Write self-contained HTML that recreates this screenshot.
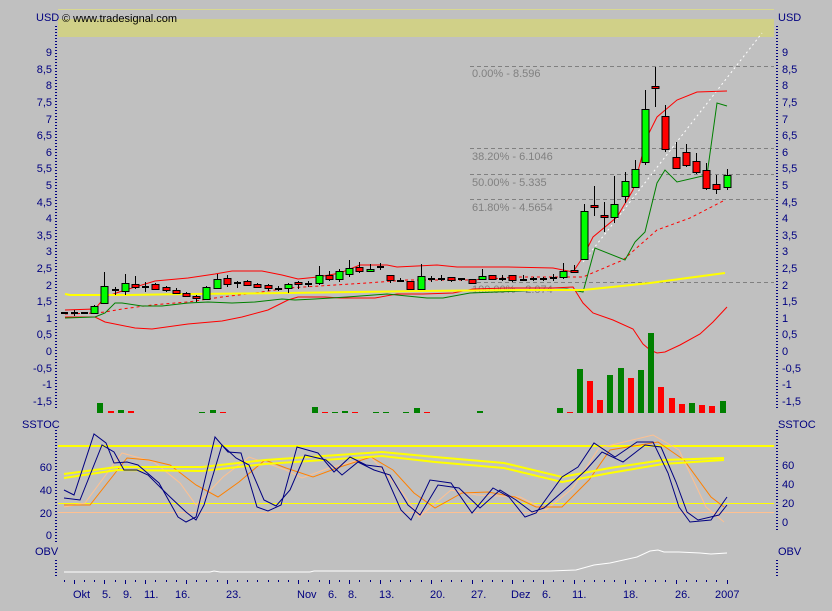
<!DOCTYPE html>
<html><head><meta charset="utf-8"><style>
html,body{margin:0;padding:0;background:#c0c0c0;}
svg{display:block;font-family:"Liberation Sans",sans-serif;font-size:11px;}
.ax{fill:#000080;}
</style></head><body>
<svg width="832" height="611" viewBox="0 0 832 611" xmlns="http://www.w3.org/2000/svg">
<rect width="832" height="611" fill="#c0c0c0"/>
<line x1="58" y1="9.5" x2="774" y2="9.5" stroke="#d8d890" stroke-width="1"/>
<rect x="58" y="19" width="716" height="18" fill="#d0d088"/>
<text x="62" y="22" fill="#000">© www.tradesignal.com</text>
<text x="36" y="21" class="ax">USD</text>
<text x="778" y="21" class="ax">USD</text>

<!-- axes dotted -->
<g stroke="#000080" stroke-width="2" stroke-dasharray="1,2">
<line x1="56" y1="26" x2="56" y2="410"/>
<line x1="777" y1="26" x2="777" y2="410"/>
<line x1="56" y1="430" x2="56" y2="542"/>
<line x1="777" y1="430" x2="777" y2="530"/>
<line x1="56" y1="560" x2="56" y2="578"/>
<line x1="777" y1="560" x2="777" y2="578"/>
</g>
<g class="ax" text-anchor="end">
<text x="52" y="56">9</text><text x="52" y="73">8,5</text><text x="52" y="89">8</text><text x="52" y="106">7,5</text><text x="52" y="123">7</text><text x="52" y="139">6,5</text><text x="52" y="156">6</text><text x="52" y="172">5,5</text><text x="52" y="189">5</text><text x="52" y="206">4,5</text><text x="52" y="222">4</text><text x="52" y="239">3,5</text><text x="52" y="255">3</text><text x="52" y="272">2,5</text><text x="52" y="289">2</text><text x="52" y="305">1,5</text><text x="52" y="322">1</text><text x="52" y="338">0,5</text><text x="52" y="355">0</text><text x="52" y="372">-0,5</text><text x="52" y="388">-1</text><text x="52" y="405">-1,5</text>
<text x="52" y="471">60</text><text x="52" y="494">40</text><text x="52" y="517">20</text><text x="52" y="539">0</text>
</g>
<g class="ax">
<text x="782" y="56">9</text><text x="782" y="73">8,5</text><text x="782" y="89">8</text><text x="782" y="106">7,5</text><text x="782" y="123">7</text><text x="782" y="139">6,5</text><text x="782" y="156">6</text><text x="782" y="172">5,5</text><text x="782" y="189">5</text><text x="782" y="206">4,5</text><text x="782" y="222">4</text><text x="782" y="239">3,5</text><text x="782" y="255">3</text><text x="782" y="272">2,5</text><text x="782" y="289">2</text><text x="782" y="305">1,5</text><text x="782" y="322">1</text><text x="782" y="338">0,5</text><text x="782" y="355">0</text><text x="782" y="372">-0,5</text><text x="782" y="388">-1</text><text x="782" y="405">-1,5</text>
<text x="782" y="469">60</text><text x="782" y="488">40</text><text x="782" y="507">20</text><text x="782" y="526">0</text>
<text x="778" y="428">SSTOC</text><text x="778" y="555">OBV</text>
</g>
<text x="22" y="428" class="ax">SSTOC</text>
<text x="35" y="555" class="ax">OBV</text>

<!-- fib lines -->
<g stroke="#808080" stroke-dasharray="4,3" stroke-width="1">
<line x1="470" y1="66.5" x2="774" y2="66.5"/>
<line x1="470" y1="148.5" x2="774" y2="148.5"/>
<line x1="470" y1="174.5" x2="774" y2="174.5"/>
<line x1="470" y1="199.5" x2="774" y2="199.5"/>
<line x1="470" y1="282.5" x2="774" y2="282.5"/>
</g>
<g fill="#808080">
<text x="472" y="77">0.00% - 8.596</text>
<text x="472" y="160">38.20% - 6.1046</text>
<text x="472" y="186">50.00% - 5.335</text>
<text x="472" y="211">61.80% - 4.5654</text>
<text x="472" y="293">100.00% - 2.074</text>
</g>
<polyline points="583,262 762,33" stroke="#fff" stroke-dasharray="2,3" fill="none"/>

<!-- bands -->
<g fill="none" stroke-width="1">
<polyline stroke="#ff0000" points="65,310 95,309 105,297 122,291 155,281 188,278 215,274 232,271 262,271 282,275 298,279 318,277 340,273 360,265 387,265 397,267 437,265 457,267 507,267 553,268 573,272 583,257 593,237 617,217 633,190 647,137 657,117 677,100 697,92 727,91"/>
<polyline stroke="#ff0000" points="65,317 95,317 105,322 135,328 152,329 188,324 222,321 242,317 268,310 288,300 298,297 325,297 340,298 375,298 397,294 423,294 453,293 473,289 507,288 553,288 573,287 583,303 593,313 613,320 633,329 643,344 650,350 657,353 665,352 680,345 700,334 713,322 727,307"/>
<polyline stroke="#ff0000" stroke-dasharray="3,3" points="65,314 95,313 105,312 122,309 152,305 188,302 222,297 255,293 288,288 335,285 367,283 407,280 470,280 520,277 573,277 583,277 623,260 657,230 690,218 725,200"/>
<polyline stroke="#008000" points="65,318 95,317 105,313 115,303 122,303 142,306 162,306 188,303 208,302 232,303 255,302 282,299 295,300 315,299 347,297 387,294 427,298 443,298 470,293 520,291 567,289 583,292 595,248 625,260 635,242 645,232 657,183 665,170 677,182 707,175 717,103 727,106"/>
<polyline stroke="#ffff00" stroke-width="2" points="65,294 70,295 128,295 188,294 288,293 353,292 420,291 520,290 583,290 650,283 725,273"/>
</g>

<!-- candles -->
<g stroke="#000" stroke-width="1">
<path d="M64.5 312V314M74.5 310V316M84.5 312V314M94.5 305V314M104.5 272V303M115.5 287V295M125.5 274V295M135.5 276V289M145.5 282V292M155.5 283V290M166.5 286V292M176.5 288V293M186.5 292V297M196.5 295V302M206.5 286V299M217.5 274V289M227.5 275V287M237.5 281V288M247.5 280V286M257.5 283V288M268.5 284V291M278.5 286V291M288.5 283V293M298.5 281V289M308.5 281V287M319.5 266V285M329.5 271V281M339.5 269V282M349.5 260V277M359.5 262V273M370.5 264V272M380.5 263V270M390.5 275V283M400.5 278V282M410.5 281V289M421.5 264V290M431.5 276V282M441.5 275V281M451.5 277V282M461.5 278V281M472.5 279V283M482.5 269V280M492.5 275V279M502.5 275V281M512.5 275V282M523.5 275V281M533.5 277V281M543.5 277V281M553.5 274V281M563.5 263V279M574.5 265V273M584.5 204V259M594.5 186V216M604.5 202V232M614.5 176V223M625.5 172V203M635.5 160V188M645.5 90V165M655.5 67V107M665.5 105V152M676.5 142V168M686.5 144V167M696.5 153V174M706.5 163V190M716.5 175V194M727.5 169V190"/>
<path stroke-width="2" d="M61 313H68M71 313H78M81 313H88M112 290H119M142 287H149M234 283H241M275 289H282M305 284H312M377 267H384M397 281H404M428 279H435M438 279H445M458 279H465M499 279H506M520 280H527M530 279H537M540 279H547M550 278H557"/>
</g>
<g stroke="#000" stroke-width="1" fill="#00ff00">
<rect x="91" y="306.5" width="7" height="7"/><rect x="101" y="286.5" width="7" height="17"/><rect x="122" y="283.5" width="7" height="8"/><rect x="203" y="287.5" width="7" height="12"/><rect x="214" y="279.5" width="7" height="9"/><rect x="285" y="284.5" width="7" height="4"/><rect x="316" y="275.5" width="7" height="8"/><rect x="336" y="271.5" width="7" height="8"/><rect x="346" y="268.5" width="7" height="6"/><rect x="367" y="269.5" width="7" height="2"/><rect x="418" y="276.5" width="7" height="13"/><rect x="479" y="276.5" width="7" height="3"/><rect x="560" y="271.5" width="7" height="6"/><rect x="581" y="211.5" width="7" height="48"/><rect x="611" y="204.5" width="7" height="13"/><rect x="622" y="181.5" width="7" height="15"/><rect x="632" y="169.5" width="7" height="18"/><rect x="642" y="109.5" width="7" height="53"/><rect x="724" y="175.5" width="7" height="12"/>
</g>
<g stroke="#000" stroke-width="1" fill="#ff0000">
<rect x="132" y="284.5" width="7" height="3"/><rect x="152" y="284.5" width="7" height="5"/><rect x="163" y="287.5" width="7" height="3"/><rect x="173" y="290.5" width="7" height="3"/><rect x="183" y="293.5" width="7" height="3"/><rect x="193" y="296.5" width="7" height="2"/><rect x="224" y="278.5" width="7" height="6"/><rect x="244" y="281.5" width="7" height="4"/><rect x="254" y="284.5" width="7" height="3"/><rect x="265" y="285.5" width="7" height="3"/><rect x="295" y="282.5" width="7" height="2"/><rect x="326" y="275.5" width="7" height="4"/><rect x="356" y="267.5" width="7" height="4"/><rect x="387" y="275.5" width="7" height="5"/><rect x="407" y="281.5" width="7" height="8"/><rect x="448" y="277.5" width="7" height="3"/><rect x="469" y="279.5" width="7" height="4"/><rect x="489" y="275.5" width="7" height="4"/><rect x="509" y="275.5" width="7" height="5"/><rect x="571" y="270.5" width="7" height="2"/><rect x="591" y="205.5" width="7" height="2"/><rect x="601" y="215.5" width="7" height="2"/><rect x="652" y="86.5" width="7" height="2"/><rect x="662" y="116.5" width="7" height="33"/><rect x="673" y="157.5" width="7" height="11"/><rect x="683" y="152.5" width="7" height="13"/><rect x="693" y="161.5" width="7" height="11"/><rect x="703" y="170.5" width="7" height="18"/><rect x="713" y="184.5" width="7" height="5"/>
</g>

<!-- volume -->
<g fill="#008000">
<rect x="97" y="403" width="6" height="10"/><rect x="118" y="410" width="6" height="3"/><rect x="199" y="412" width="6" height="1"/><rect x="210" y="410" width="6" height="3"/><rect x="312" y="407" width="6" height="6"/><rect x="332" y="412" width="6" height="1"/><rect x="342" y="411" width="6" height="2"/><rect x="373" y="412" width="6" height="1"/><rect x="383" y="412" width="6" height="1"/><rect x="403" y="412" width="6" height="1"/><rect x="414" y="408" width="6" height="5"/><rect x="477" y="411" width="6" height="2"/><rect x="557" y="408" width="6" height="5"/><rect x="577" y="369" width="6" height="44"/><rect x="607" y="375" width="6" height="38"/><rect x="618" y="368" width="6" height="45"/><rect x="638" y="370" width="6" height="43"/><rect x="648" y="333" width="6" height="80"/><rect x="689" y="403" width="6" height="10"/><rect x="720" y="401" width="6" height="12"/>
</g>
<g fill="#ff0000">
<rect x="108" y="411" width="6" height="2"/><rect x="128" y="411" width="6" height="2"/><rect x="220" y="412" width="6" height="1"/><rect x="322" y="412" width="6" height="1"/><rect x="352" y="412" width="6" height="1"/><rect x="424" y="412" width="6" height="1"/><rect x="567" y="412" width="6" height="1"/><rect x="587" y="381" width="6" height="32"/><rect x="597" y="400" width="6" height="13"/><rect x="628" y="378" width="6" height="35"/><rect x="658" y="387" width="6" height="26"/><rect x="669" y="398" width="6" height="15"/><rect x="679" y="404" width="6" height="9"/><rect x="699" y="405" width="6" height="8"/><rect x="709" y="406" width="6" height="7"/>
</g>

<!-- stoch -->
<line x1="58" y1="446" x2="774" y2="446" stroke="#ffff00" stroke-width="2"/>
<line x1="58" y1="503.5" x2="774" y2="503.5" stroke="#ffff00" stroke-width="1"/>
<line x1="58" y1="512.5" x2="774" y2="512.5" stroke="#ffc090" stroke-width="1"/>
<g fill="none" stroke-width="1">
<polyline stroke="#ffc090" points="64,507 85,503 122,453 154,462 180,483 196,505 223,477 249,457 286,470 302,478 329,468 371,457 403,493 419,517 451,490 477,495 520,497 546,510 573,488 599,448 653,435 679,450 706,507 724,522"/>
<polyline stroke="#ff8000" points="64,505 90,505 127,458 149,460 170,465 196,485 218,497 239,482 265,460 286,468 313,477 340,467 371,457 393,470 414,493 435,508 462,493 488,492 515,497 536,507 562,507 589,480 610,450 658,442 684,460 711,497 724,507"/>
<polyline stroke="#ffff00" stroke-width="2" points="64,474 117,467 202,467 265,460 382,452 435,457 504,463 562,477 610,468 663,460 724,458"/>
<polyline stroke="#ffff00" stroke-width="2" points="64,478 117,470 202,471 265,464 382,456 435,462 504,468 562,482 610,473 663,464 724,460"/>
<polyline stroke="#000080" points="64,490 74,495 94,434 106,443 114,463 127,462 138,465 159,483 178,517 186,522 196,517 215,437 228,452 241,453 257,507 268,511 281,505 297,447 318,453 334,472 350,457 366,465 382,467 401,510 411,520 430,480 451,483 472,513 493,488 509,497 525,517 536,513 562,477 578,467 594,443 615,457 637,442 653,442 668,473 679,507 690,522 711,520 727,497"/>
<polyline stroke="#000080" points="64,498 80,500 102,445 114,452 124,470 137,470 148,475 168,495 186,512 196,520 204,505 222,445 236,458 249,465 264,500 276,506 290,490 305,455 326,460 342,475 358,462 374,470 390,475 408,505 420,515 438,485 459,488 480,508 500,490 516,500 532,512 544,508 570,485 586,470 602,452 623,462 645,445 661,447 676,482 687,512 698,520 719,515 727,505"/>
</g>

<!-- OBV -->
<polyline fill="none" stroke="#ffffff" points="64,572 210,572 214,571 220,572 310,572 314,571 550,571 576,570 594,565 610,563 637,557 650,551 658,550 664,552 679,552 700,553 711,554 727,553"/>

<!-- x axis -->
<g stroke="#000080" stroke-width="1">
<path d="M64.5 580v2M74.5 580v4M84.5 580v2M94.5 580v2M104.5 580v4M115.5 580v2M125.5 580v4M135.5 580v2M145.5 580v4M155.5 580v2M166.5 580v2M176.5 580v2M186.5 580v4M196.5 580v2M206.5 580v2M217.5 580v2M227.5 580v4M237.5 580v2M247.5 580v2M257.5 580v2M268.5 580v2M278.5 580v2M288.5 580v2M298.5 580v4M308.5 580v2M319.5 580v2M329.5 580v4M339.5 580v2M349.5 580v4M359.5 580v2M370.5 580v2M380.5 580v4M390.5 580v2M400.5 580v2M410.5 580v2M421.5 580v2M431.5 580v4M441.5 580v2M451.5 580v2M461.5 580v2M472.5 580v4M482.5 580v2M492.5 580v2M502.5 580v2M512.5 580v4M523.5 580v2M533.5 580v2M543.5 580v4M553.5 580v2M563.5 580v2M574.5 580v4M584.5 580v2M594.5 580v2M604.5 580v2M614.5 580v2M625.5 580v4M635.5 580v2M645.5 580v2M655.5 580v2M665.5 580v2M676.5 580v4M686.5 580v2M696.5 580v2M706.5 580v2M716.5 580v2M727.5 580v4"/>
</g>
<g class="ax">
<text x="73" y="598">Okt</text><text x="102" y="598">5.</text><text x="123" y="598">9.</text><text x="144" y="598">11.</text><text x="175" y="598">16.</text><text x="226" y="598">23.</text><text x="297" y="598">Nov</text><text x="328" y="598">6.</text><text x="348" y="598">8.</text><text x="379" y="598">13.</text><text x="430" y="598">20.</text><text x="471" y="598">27.</text><text x="511" y="598">Dez</text><text x="542" y="598">6.</text><text x="572" y="598">11.</text><text x="623" y="598">18.</text><text x="675" y="598">26.</text><text x="715" y="598">2007</text>
</g>
</svg>
</body></html>
